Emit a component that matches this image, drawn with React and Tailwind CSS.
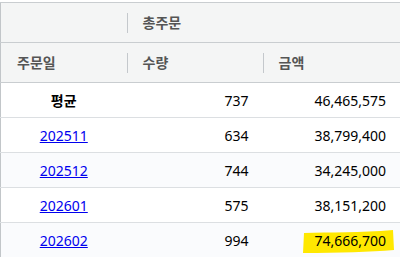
import React from "react";

const ROWS = [
  { month: "202511", qty: "634", amount: "38,799,400" },
  { month: "202512", qty: "744", amount: "34,245,000" },
  { month: "202601", qty: "575", amount: "38,151,200" },
  { month: "202602", qty: "994", amount: "74,666,700", marked: true },
];

const FONT = { fontFamily: "'Noto Sans', 'Noto Sans CJK KR', sans-serif" };

const Sep = () => (
  <span className="absolute left-0 top-1/2 h-[20px] w-px -translate-y-1/2 bg-[#c4c8cc]" />
);

const Marker = () => (
  <svg
    className="absolute right-[4px] top-[5px] h-[27px] w-[96px]"
    viewBox="0 0 96 27"
    preserveAspectRatio="none"
  >
    <path
      d="M4 5 C30 4 60 5 93 2 L94 22 C70 24 40 25 3 25 Z"
      fill="#ffe800"
    />
  </svg>
);

export default function App() {
  return (
    <div className="min-h-[257px] bg-white pt-[2px]" style={FONT}>
      <table className="w-full table-fixed border-collapse border-l border-[#c2c6c9] text-[14px]">
        <colgroup>
          <col className="w-[126px]" />
          <col className="w-[136px]" />
          <col />
        </colgroup>
        <thead className="bg-[#f4f5f5] text-[#555]">
          <tr className="h-[40px] border-y border-[#c9cdd0]">
            <th />
            <th colSpan={2} className="relative px-4 text-left font-semibold">
              <Sep />
              총주문
            </th>
          </tr>
          <tr className="h-[40px] border-b border-[#c9cdd0]">
            <th className="px-4 text-left font-semibold">주문일</th>
            <th className="relative px-4 text-left font-semibold">
              <Sep />
              수량
            </th>
            <th className="relative px-4 text-left font-semibold">
              <Sep />
              금액
            </th>
          </tr>
        </thead>
        <tbody className="text-black">
          <tr className="h-[35px] border-b border-[#dcdfe2]">
            <td className="text-center font-semibold">평균</td>
            <td className="pr-[14px] text-right">737</td>
            <td className="pr-[14px] text-right">46,465,575</td>
          </tr>
          {ROWS.map((row, i) => (
            <tr
              key={row.month}
              className={`h-[35px] border-b border-[#dcdfe2] ${i % 2 === 1 ? "bg-[#fafbfd]" : "bg-white"}`}
            >
              <td className="text-center">
                <a href="#" className="text-[#0000ee] underline">
                  {row.month}
                </a>
              </td>
              <td className="pr-[14px] text-right">{row.qty}</td>
              <td className="relative pr-[14px] text-right">
                {row.marked && <Marker />}
                <span className="relative">{row.amount}</span>
              </td>
            </tr>
          ))}
        </tbody>
      </table>
    </div>
  );
}
